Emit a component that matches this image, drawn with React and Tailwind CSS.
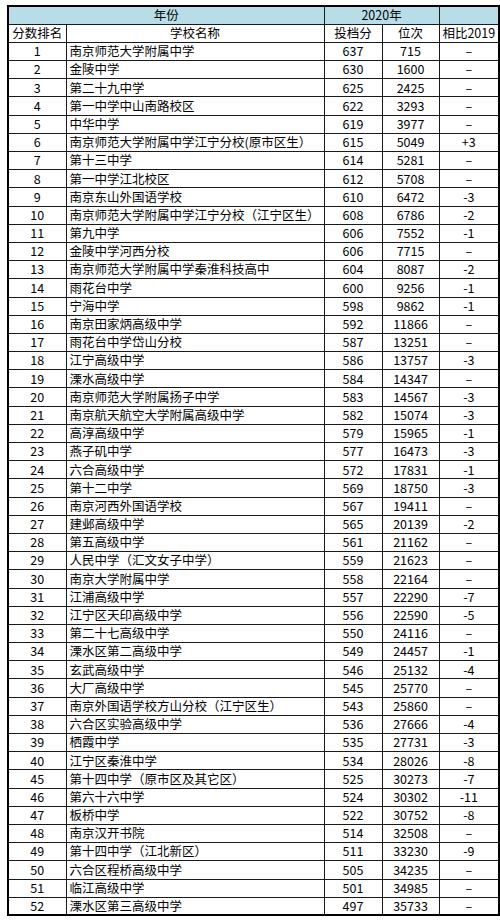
const rows = [
  [1, "南京师范大学附属中学", 637, 715, "–"],
  [2, "金陵中学", 630, 1600, "–"],
  [3, "第二十九中学", 625, 2425, "–"],
  [4, "第一中学中山南路校区", 622, 3293, "–"],
  [5, "中华中学", 619, 3977, "–"],
  [6, "南京师范大学附属中学江宁分校(原市区生）", 615, 5049, "+3"],
  [7, "第十三中学", 614, 5281, "–"],
  [8, "第一中学江北校区", 612, 5708, "–"],
  [9, "南京东山外国语学校", 610, 6472, "-3"],
  [10, "南京师范大学附属中学江宁分校（江宁区生）", 608, 6786, "-2"],
  [11, "第九中学", 606, 7552, "-1"],
  [12, "金陵中学河西分校", 606, 7715, "–"],
  [13, "南京师范大学附属中学秦淮科技高中", 604, 8087, "-2"],
  [14, "雨花台中学", 600, 9256, "-1"],
  [15, "宁海中学", 598, 9862, "-1"],
  [16, "南京田家炳高级中学", 592, 11866, "–"],
  [17, "雨花台中学岱山分校", 587, 13251, "–"],
  [18, "江宁高级中学", 586, 13757, "-3"],
  [19, "溧水高级中学", 584, 14347, "–"],
  [20, "南京师范大学附属扬子中学", 583, 14567, "-3"],
  [21, "南京航天航空大学附属高级中学", 582, 15074, "-3"],
  [22, "高淳高级中学", 579, 15965, "-1"],
  [23, "燕子矶中学", 577, 16473, "-3"],
  [24, "六合高级中学", 572, 17831, "-1"],
  [25, "第十二中学", 569, 18750, "-3"],
  [26, "南京河西外国语学校", 567, 19411, "–"],
  [27, "建邺高级中学", 565, 20139, "-2"],
  [28, "第五高级中学", 561, 21162, "–"],
  [29, "人民中学（汇文女子中学）", 559, 21623, "–"],
  [30, "南京大学附属中学", 558, 22164, "–"],
  [31, "江浦高级中学", 557, 22290, "-7"],
  [32, "江宁区天印高级中学", 556, 22590, "-5"],
  [33, "第二十七高级中学", 550, 24116, "–"],
  [34, "溧水区第二高级中学", 549, 24457, "-1"],
  [35, "玄武高级中学", 546, 25132, "-4"],
  [36, "大厂高级中学", 545, 25770, "–"],
  [37, "南京外国语学校方山分校（江宁区生）", 543, 25860, "–"],
  [38, "六合区实验高级中学", 536, 27666, "-4"],
  [39, "栖霞中学", 535, 27731, "-3"],
  [40, "江宁区秦淮中学", 534, 28026, "-8"],
  [45, "第十四中学（原市区及其它区）", 525, 30273, "-7"],
  [46, "第六十六中学", 524, 30302, "-11"],
  [47, "板桥中学", 522, 30752, "-8"],
  [48, "南京汉开书院", 514, 32508, "–"],
  [49, "第十四中学（江北新区）", 511, 33230, "-9"],
  [50, "六合区程桥高级中学", 505, 34235, "–"],
  [51, "临江高级中学", 501, 34985, "–"],
  [52, "溧水区第三高级中学", 497, 35733, "–"],
]

const cell = "border border-[#1a1a1a] p-0 text-center align-middle"

export default function App() {
  return (
    <div
      className="bg-white pl-[7px] pt-[5px] pb-[6px] text-[12.5px] leading-none text-black"
      style={{ fontFamily: '"Noto Sans CJK SC", "Liberation Sans", sans-serif' }}
    >
      <table className="table-fixed border-collapse border-2 border-black w-[491px]">
        <colgroup>
          <col className="w-[58px]" />
          <col className="w-[258px]" />
          <col className="w-[58px]" />
          <col className="w-[57px]" />
          <col className="w-[60px]" />
        </colgroup>
        <thead>
          <tr className="h-[18.2px] bg-[#b7dee8]">
            <td colSpan={2} className={cell}>年份</td>
            <td colSpan={2} className={cell}>2020年</td>
            <td className={cell}></td>
          </tr>
          <tr className="h-[18.2px]">
            <td className={cell}>分数排名</td>
            <td className={cell}>学校名称</td>
            <td className={cell}>投档分</td>
            <td className={cell}>位次</td>
            <td className={cell}>相比2019</td>
          </tr>
        </thead>
        <tbody>
          {rows.map(([rank, name, score, pos, diff]) => (
            <tr key={rank} className="h-[18.2px]">
              <td className={cell}>{rank}</td>
              <td className="border border-[#1a1a1a] p-0 pl-[3px] text-left align-middle whitespace-nowrap overflow-hidden">
                {name}
              </td>
              <td className={cell}>{score}</td>
              <td className={cell}>{pos}</td>
              <td className={cell}>{diff}</td>
            </tr>
          ))}
        </tbody>
      </table>
    </div>
  )
}
